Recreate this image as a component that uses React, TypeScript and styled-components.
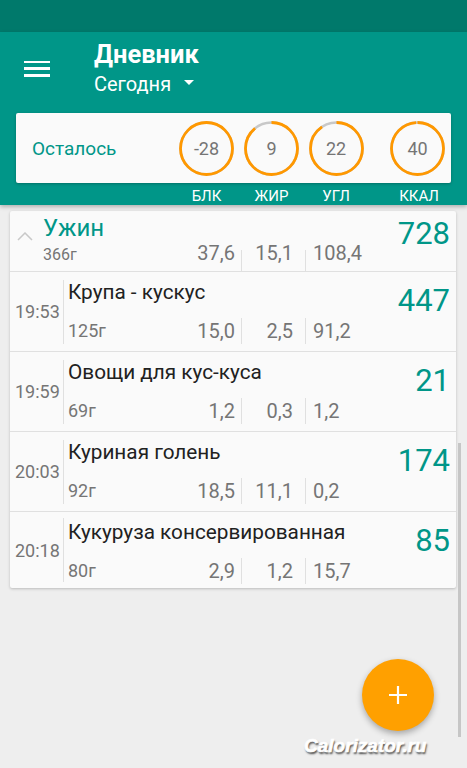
import React from 'react'
import styled, { createGlobalStyle } from 'styled-components'

const colors = {
  status: '#00796b',
  teal: '#009688',
  orange: '#ff9800',
  amber: '#ffa000',
  page: '#eeeeee',
  card: '#fafafa',
  divider: '#e0e0e0',
  text: '#212121',
  muted: '#757575',
  ringTrack: '#c8c8c8'
}

const GlobalStyle = createGlobalStyle`
  html, body {
    margin: 0;
    padding: 0;
    background: ${colors.page};
    font-family: Roboto, 'Noto Sans', 'Liberation Sans', sans-serif;
  }
  * {
    box-sizing: border-box;
  }
`

const Screen = styled.div`
  position: relative;
  width: 467px;
  min-height: 768px;
  overflow: hidden;
  background: ${colors.page};
`

const StatusBar = styled.div`
  height: 32px;
  background: ${colors.status};
`

const AppBar = styled.header`
  background: ${colors.teal};
  box-shadow: 0 2px 4px rgba(0, 0, 0, 0.25);
  position: relative;
  z-index: 1;
`

const Toolbar = styled.div`
  display: flex;
  height: 81px;
  padding: 6.5px 0 0 24px;
  color: #fff;
`

const MenuButton = styled.div`
  width: 26px;
  height: 16px;
  margin-top: 22px;
  margin-right: 44px;
  display: flex;
  flex-direction: column;
  justify-content: space-between;

  span {
    display: block;
    height: 2.5px;
    background: #fff;
  }
`

const TitleBlock = styled.div`
  display: flex;
  flex-direction: column;
`

const Title = styled.div`
  font-size: 25.5px;
  font-weight: 700;
  line-height: 30px;
`

const DatePicker = styled.div`
  margin-top: 2.5px;
  display: flex;
  align-items: center;
  gap: 13px;
  font-size: 20px;
  line-height: 26px;

  svg {
    margin-top: -3px;
  }
`

const statGrid = `
  display: grid;
  grid-template-columns: 1fr 65px 65px 64px 83px;
  margin: 0 16px;
`

const SummaryCard = styled.div`
  ${statGrid}
  height: 70px;
  align-items: center;
  background: ${colors.card};
  border-radius: 2px;
  box-shadow: 0 1px 3px rgba(0, 0, 0, 0.25);
`

const SummaryLabel = styled.div`
  padding-left: 16px;
  font-size: 19px;
  color: ${colors.teal};
`

const RingBox = styled.div<{ $end?: boolean }>`
  position: relative;
  width: 55px;
  height: 55px;
  justify-self: ${(p) => (p.$end ? 'end' : 'center')};
  margin-right: ${(p) => (p.$end ? '6px' : '0')};
  display: flex;
  align-items: center;
  justify-content: center;

  svg {
    position: absolute;
    inset: 0;
  }
`

const RingValue = styled.span`
  position: relative;
  font-size: 18px;
  color: ${colors.muted};
`

const Legend = styled.div`
  ${statGrid}
  padding: 4px 0 0;
  height: 22px;
  font-size: 15px;
  line-height: 18px;
  color: #fff;
`

const LegendItem = styled.div<{ $end?: boolean }>`
  justify-self: ${(p) => (p.$end ? 'end' : 'center')};
  margin-right: ${(p) => (p.$end ? '12px' : '0')};
`

const DiaryCard = styled.section`
  margin: 6px 11px 0 10px;
  background: ${colors.card};
  border-radius: 2px;
  box-shadow: 0 1px 3px rgba(0, 0, 0, 0.22);
`

const GroupHeader = styled.div`
  display: flex;
  height: 60px;
`

const Chevron = styled.div`
  width: 33px;
  padding: 15px 0 0 7px;
`

const GroupBody = styled.div`
  flex: 1;
  display: flex;
  flex-direction: column;
`

const GroupTitle = styled.div`
  padding-top: 3px;
  font-size: 24px;
  line-height: 28px;
  color: ${colors.teal};
`

const Bottom = styled.div<{ $gap?: number }>`
  display: flex;
  align-items: flex-end;
  margin-top: ${(p) => p.$gap ?? 0}px;
`

const Weight = styled.div<{ $small?: boolean }>`
  flex: 1;
  align-self: flex-start;
  padding-top: ${(p) => (p.$small ? '2px' : '0')};
  font-size: ${(p) => (p.$small ? '16px' : '18px')};
  line-height: ${(p) => (p.$small ? '22px' : '26px')};
  color: ${colors.muted};
`

const Macros = styled.div<{ $lift?: number }>`
  display: flex;
  margin-bottom: ${(p) => p.$lift ?? 0}px;
  font-size: 20px;
  color: ${colors.muted};
`

const MacroCell = styled.div<{ $w: number; $pad: number; $left?: boolean; $rule?: number; $h: number; $lh: number }>`
  width: ${(p) => p.$w}px;
  height: ${(p) => p.$h}px;
  line-height: ${(p) => p.$lh}px;
  text-align: ${(p) => (p.$left ? 'left' : 'right')};
  padding-${(p) => (p.$left ? 'left' : 'right')}: ${(p) => p.$pad}px;
  background: ${(p) =>
    p.$rule ? `linear-gradient(${colors.divider}, ${colors.divider}) right bottom / 1px ${p.$rule}px no-repeat` : 'none'};
`

const Kcal = styled.div<{ $top: number }>`
  width: 96px;
  padding: ${(p) => p.$top}px 6px 0 0;
  text-align: right;
  font-size: 31px;
  line-height: 38px;
  color: ${colors.teal};
`

const Item = styled.div`
  display: flex;
  height: 80px;
  border-top: 1px solid ${colors.divider};

  &:last-child {
    height: 77px;
  }
`

const Time = styled.div`
  width: 54px;
  height: 64px;
  align-self: center;
  display: flex;
  align-items: center;
  padding-left: 5px;
  border-right: 1px solid ${colors.divider};
  font-size: 18px;
  color: ${colors.muted};
`

const ItemBody = styled.div`
  flex: 1;
  padding-left: 4px;
  display: flex;
  flex-direction: column;
`

const Name = styled.div`
  padding-top: 9px;
  font-size: 20.75px;
  line-height: 22px;
  color: ${colors.text};
  white-space: nowrap;
`

const Fab = styled.button`
  position: absolute;
  left: 362px;
  top: 659px;
  width: 72px;
  height: 72px;
  border: none;
  border-radius: 50%;
  background: ${colors.amber};
  box-shadow: 0 3px 6px rgba(0, 0, 0, 0.3);
  display: flex;
  align-items: center;
  justify-content: center;
  padding: 0;
`

const Scrollbar = styled.div`
  position: absolute;
  left: 458px;
  top: 443px;
  width: 3px;
  height: 294px;
  background: #c6c6c6;
`

const Watermark = styled.div`
  position: absolute;
  left: 304px;
  top: 735px;
  font-family: 'Liberation Sans', Arial, sans-serif;
  font-size: 19px;
  font-weight: 700;
  font-style: italic;
  color: #fff;
  -webkit-text-stroke: 0.6px #fff;
  text-shadow: 1px 2px 2px rgba(0, 0, 0, 0.7);
`

function Ring({ value, progress, end }: { value: string; progress: number; end?: boolean }) {
  const r = 26
  const c = 2 * Math.PI * r
  return (
    <RingBox $end={end}>
      <svg width="55" height="55" viewBox="0 0 55 55">
        <circle cx="27.5" cy="27.5" r={r} fill="none" stroke={colors.ringTrack} strokeWidth="2.6" />
        <circle
          cx="27.5"
          cy="27.5"
          r={r}
          fill="none"
          stroke={colors.orange}
          strokeWidth="2.8"
          strokeDasharray={`${c * progress} ${c}`}
          transform="rotate(-90 27.5 27.5)"
        />
      </svg>
      <RingValue>{value}</RingValue>
    </RingBox>
  )
}

type MacroValues = [string, string, string]

function MacroRow({ values, group, lift }: { values: MacroValues; group?: boolean; lift?: number }) {
  const h = group ? 29 : 26
  const lh = group ? 22 : 26
  const rule = group ? 21 : 26
  return (
    <Macros $lift={lift}>
      <MacroCell $w={82} $pad={7} $h={h} $lh={lh} $rule={rule}>
        {values[0]}
      </MacroCell>
      <MacroCell $w={64} $pad={13} $h={h} $lh={lh} $rule={rule}>
        {values[1]}
      </MacroCell>
      <MacroCell $w={54} $pad={7} $h={h} $lh={lh} $left>
        {values[2]}
      </MacroCell>
    </Macros>
  )
}

const entries: { time: string; name: string; weight: string; macros: MacroValues; kcal: string }[] = [
  { time: '19:53', name: 'Крупа - кускус', weight: '125г', macros: ['15,0', '2,5', '91,2'], kcal: '447' },
  { time: '19:59', name: 'Овощи для кус-куса', weight: '69г', macros: ['1,2', '0,3', '1,2'], kcal: '21' },
  { time: '20:03', name: 'Куриная голень', weight: '92г', macros: ['18,5', '11,1', '0,2'], kcal: '174' },
  { time: '20:18', name: 'Кукуруза консервированная', weight: '80г', macros: ['2,9', '1,2', '15,7'], kcal: '85' }
]

export default function App() {
  return (
    <Screen>
      <GlobalStyle />
      <StatusBar />
      <AppBar>
        <Toolbar>
          <MenuButton>
            <span />
            <span />
            <span />
          </MenuButton>
          <TitleBlock>
            <Title>Дневник</Title>
            <DatePicker>
              Сегодня
              <svg width="10" height="5" viewBox="0 0 10 5">
                <path d="M0 0h10L5 5z" fill="#fff" />
              </svg>
            </DatePicker>
          </TitleBlock>
        </Toolbar>
        <SummaryCard>
          <SummaryLabel>Осталось</SummaryLabel>
          <Ring value="-28" progress={1} />
          <Ring value="9" progress={0.885} />
          <Ring value="22" progress={0.9} />
          <Ring value="40" progress={0.985} end />
        </SummaryCard>
        <Legend>
          <span />
          <LegendItem>БЛК</LegendItem>
          <LegendItem>ЖИР</LegendItem>
          <LegendItem>УГЛ</LegendItem>
          <LegendItem $end>ККАЛ</LegendItem>
        </Legend>
      </AppBar>

      <DiaryCard>
        <GroupHeader>
          <Chevron>
            <svg width="16" height="9" viewBox="0 0 16 9">
              <path d="M1 8l7-7 7 7" fill="none" stroke="#c8c8c8" strokeWidth="1.5" />
            </svg>
          </Chevron>
          <GroupBody>
            <GroupTitle>Ужин</GroupTitle>
            <Bottom>
              <Weight $small>366г</Weight>
              <MacroRow values={['37,6', '15,1', '108,4']} group />
            </Bottom>
          </GroupBody>
          <Kcal $top={4}>728</Kcal>
        </GroupHeader>
        {entries.map((e, i) => (
          <Item key={e.time}>
            <Time>{e.time}</Time>
            <ItemBody>
              <Name>{e.name}</Name>
              <Bottom $gap={15}>
                <Weight>{e.weight}</Weight>
                <MacroRow values={e.macros} lift={i === entries.length - 1 ? 8 : 0} />
              </Bottom>
            </ItemBody>
            <Kcal $top={10}>{e.kcal}</Kcal>
          </Item>
        ))}
      </DiaryCard>

      <Scrollbar />
      <Fab aria-label="Добавить">
        <svg width="20" height="20" viewBox="0 0 20 20">
          <path d="M10 1v18M1 10h18" stroke="#fff" strokeWidth="2.2" />
        </svg>
      </Fab>
      <Watermark>Calorizator.ru</Watermark>
    </Screen>
  )
}
